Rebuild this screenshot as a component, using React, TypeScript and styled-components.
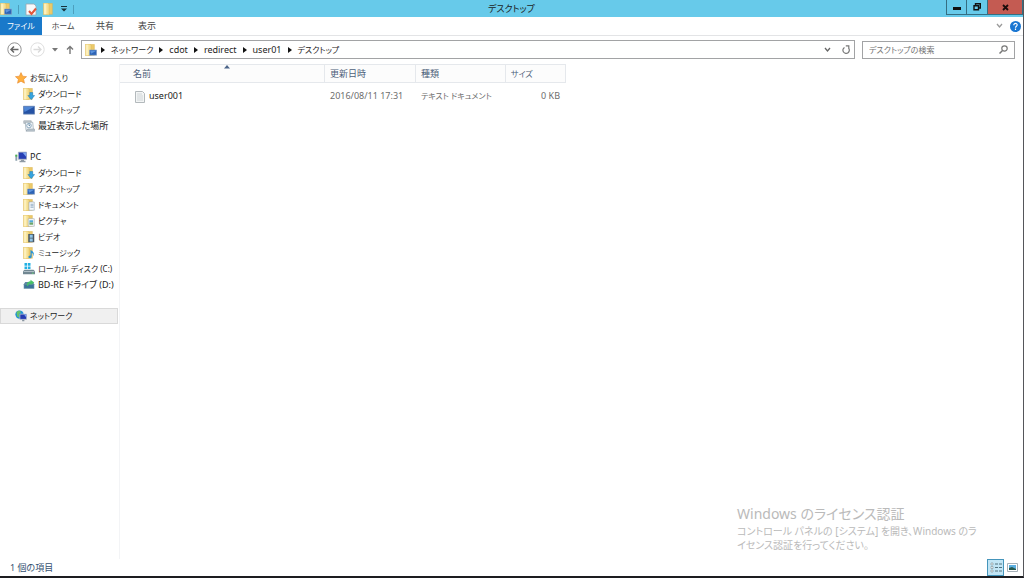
import React from "react";
import styled, { createGlobalStyle } from "styled-components";

const Global = createGlobalStyle`
  *, *::before, *::after { box-sizing: border-box; }
  body { margin: 0; background: #fff; }
  body, button, input {
    font-family: "Noto Sans", "Noto Sans CJK JP", sans-serif;
    font-size: 9px;
    line-height: 16px;
    font-feature-settings: "palt";
    color: #1c1c1c;
  }
  button { border: 0; padding: 0; background: none; }
  a { color: inherit; text-decoration: none; }
  svg { display: block; flex: none; }
`;

const Window = styled.div`
  display: flex;
  flex-direction: column;
  min-height: 100vh;
  background: #fff;
  border-right: 1px solid #55565a;
  border-bottom: 2px solid #1d1d20;
`;

const TitleBar = styled.header`
  display: grid;
  grid-template-columns: 1fr auto 1fr;
  height: 17px;
  background: #67caea;
`;

const QuickTools = styled.div`
  display: flex;
  align-items: center;
  gap: 6px;
`;

const Divider = styled.span`
  width: 1px;
  height: 9px;
  background: #4c9fbd;
`;

const Title = styled.h1`
  margin: 0;
  font-size: 9px;
  line-height: 18px;
  font-weight: 400;
`;

const WindowButtons = styled.div`
  display: flex;
  justify-content: flex-end;
  height: 15px;
`;

const WindowButton = styled.button<{ $close?: boolean }>`
  display: grid;
  place-items: center;
  width: ${(p) => (p.$close ? 35 : 21)}px;
  border: 1px solid #356e82;
  border-top: 0;
  border-left-width: ${(p) => (p.$close ? 0 : 1)}px;
  background: ${(p) => (p.$close ? "#c45b52" : "transparent")};
  & + & { border-left-width: 0; }
`;

const Ribbon = styled.nav`
  display: flex;
  align-items: center;
  height: 19px;
  border-bottom: 1px solid #e3e4e6;
`;

const Tab = styled.button<{ $active?: boolean; $kana?: boolean }>`
  width: 42px;
  height: 18px;
  font-size: ${(p) => (p.$kana ? 8 : 9)}px;
  line-height: 18px;
  white-space: nowrap;
  color: ${(p) => (p.$active ? "#fff" : "#444")};
  background: ${(p) => (p.$active ? "#1979ca" : "transparent")};
`;

const RibbonEnd = styled.div`
  display: flex;
  align-items: center;
  gap: 7px;
  margin-left: auto;
  padding-right: 2px;
`;

const NavBar = styled.div`
  display: flex;
  align-items: center;
  gap: 7px;
  padding: 4px 8px 5px 7px;
`;

const NavButtons = styled.div`
  display: flex;
  align-items: center;
  justify-content: space-between;
  width: 67px;
`;

const IconButton = styled.button`
  display: grid;
  place-items: center;
`;

const AddressBox = styled.div`
  display: flex;
  flex: 1;
  align-items: center;
  height: 19px;
  padding: 0 4px 0 3px;
  border: 1px solid #a2a3a5;
`;

const Crumbs = styled.ol`
  display: flex;
  flex: 1;
  align-items: center;
  margin: 0;
  padding: 0 0 0 4px;
  list-style: none;
`;

const Crumb = styled.li<{ $kana?: boolean }>`
  display: flex;
  align-items: center;
  gap: 6px;
  margin-right: 6px;
  font-size: ${(p) => (p.$kana ? 8 : 9)}px;
`;

const AddressTools = styled.div`
  display: flex;
  align-items: center;
  gap: 11px;
`;

const SearchBox = styled.label`
  display: flex;
  align-items: center;
  width: 153px;
  height: 18px;
  padding: 0 6px;
  border: 1px solid #a2a3a5;
`;

const SearchInput = styled.input`
  flex: 1;
  min-width: 0;
  padding: 0;
  border: 0;
  outline: 0;
  background: none;
  font-size: 8px;
  &::placeholder { color: #737373; opacity: 1; }
`;

const Body = styled.div`
  display: flex;
  flex: 1;
`;

const Sidebar = styled.nav`
  display: flex;
  flex-direction: column;
  gap: 15px;
  width: 120px;
  padding: 6px 1px 0 0;
  border-right: 1px solid #f3f4f6;
`;

const Group = styled.ul`
  margin: 0;
  padding: 0;
  list-style: none;
`;

const Place = styled.a<{ $level: number; $kana?: boolean; $selected?: boolean }>`
  display: flex;
  align-items: center;
  gap: 3px;
  height: 16px;
  padding-left: ${(p) => (p.$level ? 23 : 15)}px;
  font-size: ${(p) => (p.$kana ? 8 : 9)}px;
  white-space: nowrap;
  outline: ${(p) => (p.$selected ? "1px solid #d9d9d9" : "none")};
  outline-offset: -1px;
  background: ${(p) => (p.$selected ? "#f0f0f0" : "transparent")};
`;

const Files = styled.main`
  flex: 1;
  min-width: 0;
`;

const FileTable = styled.table`
  width: 446px;
  table-layout: fixed;
  border-collapse: separate;
  border-spacing: 0;
`;

const HeadCell = styled.th<{ $width: number; $first?: boolean; $kana?: boolean }>`
  position: relative;
  width: ${(p) => p.$width}px;
  height: 19px;
  padding: 0 0 0 ${(p) => (p.$first ? 13 : 5)}px;
  text-align: left;
  font-size: ${(p) => (p.$kana ? 8 : 9)}px;
  font-weight: 400;
  color: #4c607a;
  background: #fcfcfc;
  border: 1px solid #e5e8ec;
  border-left: 0;
`;

const SortMark = styled.svg`
  position: absolute;
  top: 0;
  left: 51%;
`;

const Cell = styled.td<{ $first?: boolean; $right?: boolean; $kana?: boolean }>`
  height: 26px;
  padding: 0 ${(p) => (p.$right ? 6 : 0)}px 0 ${(p) => (p.$first ? 14 : 5)}px;
  text-align: ${(p) => (p.$right ? "right" : "left")};
  font-size: ${(p) => (p.$kana ? 8 : 9)}px;
  color: #6d6d6d;
  white-space: nowrap;
`;

const FileName = styled.span`
  display: flex;
  align-items: center;
  gap: 3px;
  color: #1c1c1c;
`;

const StatusBar = styled.footer`
  display: flex;
  align-items: center;
  justify-content: space-between;
  height: 17px;
  padding: 0 2px 0 10px;
  color: #35506f;
`;

const ViewButtons = styled.div`
  display: flex;
`;

const ViewButton = styled.button<{ $on?: boolean }>`
  display: grid;
  place-items: center;
  width: 17px;
  height: 17px;
  border: 1px solid ${(p) => (p.$on ? "#4595bb" : "transparent")};
  background: ${(p) => (p.$on ? "#c1e5f5" : "transparent")};
`;

const Notice = styled.aside`
  position: absolute;
  right: 27px;
  bottom: 26px;
  width: 260px;
  color: #bababa;
  font-size: 10px;
  line-height: 14px;
  pointer-events: none;
`;

const NoticeTitle = styled.div`
  font-size: 14px;
  line-height: 20px;
`;

type Kind =
  | "download" | "desktop" | "document" | "picture" | "video" | "music" | "folder"
  | "star" | "screen" | "recent" | "pc" | "disk" | "drive" | "network";

const overlays: Partial<Record<Kind, React.ReactNode>> = {
  download: <path d="M9 6h4v4h2.500L11 15.500 6.500 10H9z" fill="#35a3df" stroke="#1978b8" strokeWidth=".6" />,
  desktop: <><path d="M6 8h9.500v7H6z" fill="#2c63b5" stroke="#8ba3c4" strokeWidth=".8" /><path d="M7 9h8l-7 4z" fill="#5b93dd" /></>,
  document: <><path d="M8 4h7v11H8z" fill="#f5f9fc" stroke="#94a3af" strokeWidth=".8" /><path d="M10 7h4M10 9h4M10 11h4" stroke="#7897b3" /></>,
  picture: <><path d="M7 5h8v10H7z" fill="#fff" stroke="#9ba6ad" strokeWidth=".8" /><path d="M8.500 7h5v3h-5z" fill="#52a8d8" /><path d="M8.500 10h5v3h-5z" fill="#6ca66b" /></>,
  video: <><path d="M7 4h8v11H7z" fill="#4a5763" /><path d="M9 5h4v4H9zM9 10h4v4H9z" fill="#8ec4e8" /></>,
  music: <path d="M10 4v7.200c-3-.4-4 3.800-1 3.800 2 0 2.600-1 2.600-2.500V8c3 1 2 3 1.600 4.500C16 9 14 6 10 4z" fill="#2893d8" />,
};

function Icon({ kind, size = 12 }: { kind: Kind; size?: number }) {
  let art: React.ReactNode;
  switch (kind) {
    case "star":
      art = <path d="M8 .8l2.200 4.800 5.200.6-3.900 3.500 1.100 5.200L8 12.300l-4.600 2.600 1.100-5.200L.6 6.200l5.200-.6z" fill="#ffaf3d" stroke="#e6862c" strokeWidth=".8" />;
      break;
    case "screen":
      art = <><path d="M.5 3h15v10.500H.5z" fill="#2552a4" stroke="#6d88b4" /><path d="M1 3.500h14L2 10.500z" fill="#4f86d5" /></>;
      break;
    case "recent":
      art = <><path d="M1 1h10v3.500H1z" fill="#c8ced3" stroke="#8996a0" strokeWidth=".7" /><path d="M3 3h10l1 11H4z" fill="#eef3f7" stroke="#8c9aa5" strokeWidth=".8" /><circle cx="8" cy="7.500" r="3" fill="#fff" stroke="#6d91ad" /><path d="M8 5.500v2h1.500" stroke="#3e6b90" fill="none" /><path d="M6 12h9.500v3H4z" fill="#b9c4cc" stroke="#8895a0" strokeWidth=".6" /></>;
      break;
    case "pc":
      art = <><path d="M.5 5h2.500v8H.5z" fill="#8ca0ad" /><path d="M.5 5h2.500v2.500H.5z" fill="#49b94c" /><path d="M4.500 1.500h11v9.500h-11z" fill="#263fb4" stroke="#a9b2bc" /><path d="M10 2h5v6z" fill="#7ba3f0" /><path d="M8 11.500h4v1.500h2v2H6v-2h2z" fill="#8f9aa5" /></>;
      break;
    case "disk":
      art = <><path d="M2 0h3.500v3.500H2zM6.500 0H10v3.500H6.500zM2 4.500h3.500V8H2zM6.500 4.500H10V8H6.500z" fill="#23b0e3" /><path d="M0 11L2 9h12l2 2v4H0z" fill="#718792" /><path d="M1 11h14v1H1z" fill="#c4d0d7" /><path d="M12 13h2v1h-2z" fill="#6af06d" /></>;
      break;
    case "drive":
      art = <><path d="M1 7l2-3h10l2 3v6H1z" fill="#5c88a2" /><path d="M2 8h12v4H2z" fill="#3d759b" /><path d="M5 9c0-4 2-6 5-6V1l5 3.500-5 3.500V6C8 6 7 7 7 9z" fill="#48c367" /></>;
      break;
    case "network":
      art = <><circle cx="6" cy="6" r="5.500" fill="#1f91d7" /><path d="M2 3c3-3 5-2 6 0L5 6l1 4-3-1z" fill="#67c36c" /><path d="M6.500 5.500h9v7h-9z" fill="#253bb2" stroke="#c1c8ce" /><path d="M12 6h3v4z" fill="#7ca4f2" /><path d="M9.500 13h3v2h-3z" fill="#8995a0" /></>;
      break;
    default:
      art = <><path d="M4 .5h8.500v14.500H4z" fill="#ecca69" stroke="#d6b04e" strokeWidth=".6" /><path d="M.5 0h6l1.500 2v14l-2-.5H.5z" fill="#f6df92" stroke="#dcb85a" strokeWidth=".7" /><path d="M1.500 1h3v14h-3z" fill="#fdf0bd" />{overlays[kind]}</>;
  }
  return <svg width={size} height={size} viewBox="0 0 16 16" aria-hidden="true">{art}</svg>;
}

const Triangle = () => (
  <svg width="4" height="6" viewBox="0 0 4 6" aria-hidden="true"><path d="M0 0l4 3-4 3z" fill="#111" /></svg>
);

const Chevron = ({ color }: { color: string }) => (
  <svg width="7" height="6" viewBox="0 0 7 6" aria-hidden="true"><path d="M1 1l2.500 3L6 1" fill="none" stroke={color} strokeWidth="1.300" /></svg>
);

type PlaceItem = { kind: Kind; label: string; kana?: boolean; selected?: boolean };

const groups: PlaceItem[][] = [
  [
    { kind: "star", label: "お気に入り", kana: true },
    { kind: "download", label: "ダウンロード", kana: true },
    { kind: "screen", label: "デスクトップ", kana: true },
    { kind: "recent", label: "最近表示した場所" },
  ],
  [
    { kind: "pc", label: "PC" },
    { kind: "download", label: "ダウンロード", kana: true },
    { kind: "desktop", label: "デスクトップ", kana: true },
    { kind: "document", label: "ドキュメント", kana: true },
    { kind: "picture", label: "ピクチャ", kana: true },
    { kind: "video", label: "ビデオ", kana: true },
    { kind: "music", label: "ミュージック", kana: true },
    { kind: "disk", label: "ローカル ディスク (C:)", kana: true },
    { kind: "drive", label: "BD-RE ドライブ (D:)" },
  ],
  [{ kind: "network", label: "ネットワーク", kana: true, selected: true }],
];

const path = [
  { name: "ネットワーク", kana: true },
  { name: "cdot" },
  { name: "redirect" },
  { name: "user01" },
  { name: "デスクトップ", kana: true },
];

export default function App() {
  return (
    <>
      <Global />
      <Window>
        <TitleBar>
          <QuickTools>
            <Icon kind="desktop" />
            <Divider />
            <IconButton aria-label="プロパティ">
              <svg width="12" height="13" viewBox="0 0 12 13"><path d="M1 1h8l2 2v9H1z" fill="#f8f9fa" stroke="#9aa6ae" strokeWidth=".8" /><path d="M4 8l2.500 3L11 5.500" fill="none" stroke="#e0563a" strokeWidth="2" /></svg>
            </IconButton>
            <IconButton aria-label="新しいフォルダー"><Icon kind="folder" /></IconButton>
            <IconButton aria-label="カスタマイズ">
              <svg width="6" height="6" viewBox="0 0 6 6"><path d="M0 0h6v1H0zM0 2.500h6L3 5.500z" fill="#17323c" /></svg>
            </IconButton>
            <Divider />
          </QuickTools>
          <Title>デスクトップ</Title>
          <WindowButtons>
            <WindowButton aria-label="最小化"><svg width="8" height="8"><path d="M0 4h8v3H0z" fill="#111" /></svg></WindowButton>
            <WindowButton aria-label="元に戻す"><svg width="8" height="8"><path d="M2.500 2V.7h4.800V5H6M1 2.700h4.500v4H1z" fill="none" stroke="#111" strokeWidth="1.400" /></svg></WindowButton>
            <WindowButton $close aria-label="閉じる"><svg width="7" height="7"><path d="M1 1l5 5M6 1L1 6" stroke="#1b0c0b" strokeWidth="1.800" /></svg></WindowButton>
          </WindowButtons>
        </TitleBar>

        <Ribbon>
          <Tab $active $kana>ファイル</Tab>
          <Tab $kana>ホーム</Tab>
          <Tab>共有</Tab>
          <Tab>表示</Tab>
          <RibbonEnd>
            <IconButton aria-label="リボンの展開"><Chevron color="#9a9a9a" /></IconButton>
            <IconButton aria-label="ヘルプ">
              <svg width="11" height="11" viewBox="0 0 11 11"><circle cx="5.500" cy="5.500" r="5.500" fill="#1b77d2" /><path d="M3.800 4.200C3.800 1.700 7.300 2 7.200 4c-.1 1.300-1.700 1.300-1.700 2.700M5.500 7.600v1.300" fill="none" stroke="#fff" strokeWidth="1.200" /></svg>
            </IconButton>
          </RibbonEnd>
        </Ribbon>

        <NavBar>
          <NavButtons>
            <IconButton aria-label="戻る"><svg width="15" height="15" viewBox="0 0 15 15"><circle cx="7.500" cy="7.500" r="6.700" fill="none" stroke="#929292" /><path d="M11.500 7.500H4M7 4.500l-3 3 3 3" fill="none" stroke="#666" strokeWidth="1.500" /></svg></IconButton>
            <IconButton aria-label="進む"><svg width="15" height="15" viewBox="0 0 15 15"><circle cx="7.500" cy="7.500" r="6.700" fill="none" stroke="#dedede" /><path d="M3.500 7.500H11M8 4.500l3 3-3 3" fill="none" stroke="#dadada" strokeWidth="1.300" /></svg></IconButton>
            <IconButton aria-label="履歴"><svg width="6" height="4"><path d="M0 0h6L3 3.500z" fill="#777" /></svg></IconButton>
            <IconButton aria-label="上へ"><svg width="8" height="9" viewBox="0 0 8 9"><path d="M4 9V1.500M1 4.500l3-3 3 3" fill="none" stroke="#777" strokeWidth="1.400" /></svg></IconButton>
          </NavButtons>
          <AddressBox>
            <Icon kind="desktop" />
            <Crumbs>
              {path.map(({ name, kana }) => (
                <Crumb key={name} $kana={kana}><Triangle /><a href="#">{name}</a></Crumb>
              ))}
            </Crumbs>
            <AddressTools>
              <IconButton aria-label="以前の場所"><Chevron color="#666" /></IconButton>
              <IconButton aria-label="更新"><svg width="8" height="9" viewBox="0 0 8 9"><path d="M2.500 2.400A3.200 3.200 0 1 0 6.500 3M3.800.8h3v3" fill="none" stroke="#777" strokeWidth="1.200" /></svg></IconButton>
            </AddressTools>
          </AddressBox>
          <SearchBox>
            <SearchInput type="text" placeholder="デスクトップの検索" aria-label="デスクトップの検索" />
            <svg width="9" height="9" viewBox="0 0 9 9"><circle cx="5.500" cy="3.500" r="2.700" fill="none" stroke="#777" strokeWidth="1.200" /><path d="M3.500 5.500L.5 8.500" stroke="#777" strokeWidth="1.500" /></svg>
          </SearchBox>
        </NavBar>

        <Body>
          <Sidebar>
            {groups.map((items) => (
              <Group key={items[0].label}>
                {items.map((item, i) => (
                  <li key={item.label}>
                    <Place href="#" $level={i ? 1 : 0} $kana={item.kana} $selected={item.selected}>
                      <Icon kind={item.kind} />
                      {item.label}
                    </Place>
                  </li>
                ))}
              </Group>
            ))}
          </Sidebar>
          <Files>
            <FileTable>
              <thead>
                <tr>
                  <HeadCell $width={205} $first>
                    名前
                    <SortMark width="6" height="4"><path d="M0 3.500L3 0l3 3.500z" fill="#4b6489" /></SortMark>
                  </HeadCell>
                  <HeadCell $width={91}>更新日時</HeadCell>
                  <HeadCell $width={90}>種類</HeadCell>
                  <HeadCell $width={60} $kana>サイズ</HeadCell>
                </tr>
              </thead>
              <tbody>
                <tr>
                  <Cell $first>
                    <FileName>
                      <svg width="12" height="13" viewBox="0 0 12 13"><path d="M1.500 1.500h7l2 2v9h-9z" fill="#f3f5f5" stroke="#b3b9bc" /><path d="M3 4h5M3 6h6M3 8h6M3 10h6" stroke="#c7cdd0" strokeWidth=".8" /></svg>
                      user001
                    </FileName>
                  </Cell>
                  <Cell>2016/08/11 17:31</Cell>
                  <Cell $kana>テキスト ドキュメント</Cell>
                  <Cell $right>0 KB</Cell>
                </tr>
              </tbody>
            </FileTable>
          </Files>
        </Body>

        <StatusBar>
          <span>1 個の項目</span>
          <ViewButtons>
            <ViewButton $on aria-label="詳細表示"><svg width="12" height="11"><path d="M1 1h2v2H1zM1 4.500h2v2H1zM1 8h2v2H1z" fill="#fff" stroke="#88989f" strokeWidth=".7" /><path d="M5 2h3M9 2h3M5 5.500h3M9 5.500h3M5 9h3M9 9h3" stroke="#52727f" /></svg></ViewButton>
            <ViewButton aria-label="大アイコン"><svg width="11" height="9"><path d="M.5.5h10v8H.5z" fill="#fff" stroke="#a5b0b8" /><path d="M2 2h7v5H2z" fill="#5aaee0" /><path d="M2 5l3-1 4 2v1H2z" fill="#25594d" /></svg></ViewButton>
          </ViewButtons>
        </StatusBar>
      </Window>
      <Notice>
        <NoticeTitle>Windows のライセンス認証</NoticeTitle>
        コントロール パネルの [システム] を開き、Windows のラ
        <br />
        イセンス認証を行ってください。
      </Notice>
    </>
  );
}
